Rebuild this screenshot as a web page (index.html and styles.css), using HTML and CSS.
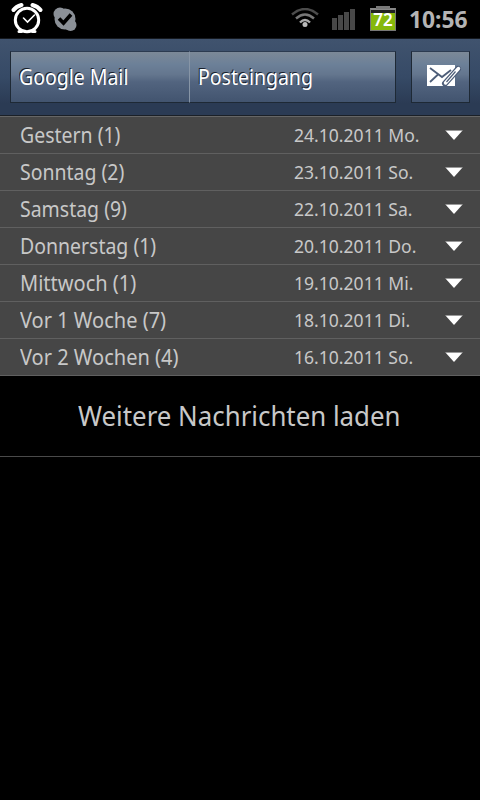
FILE: index.html
```
<!DOCTYPE html>
<html lang="de">
  <head>
    <meta charset="UTF-8" />
    <meta name="viewport" content="width=device-width, initial-scale=1.0" />
    <title>Posteingang</title>
    <link rel="stylesheet" href="styles.css">
  </head>
  <body>
    <!-- Status bar -->
    <div class="status">
      <svg class="alarm" width="32" height="34" viewBox="0 0 32 34">
        <g fill="none" stroke="#fff" stroke-linecap="round">
          <path d="M2.500 9Q5 5.500 10.500 4M21.500 4Q27 5.500 29.500 9" stroke-width="4" />
          <circle cx="16" cy="19" r="11.700" stroke-width="3" />
          <path d="M12.500 17l4 4 7-7" stroke-width="1.600" />
          <path d="M8 30.500h2.500M21.500 30.500H24" stroke-width="3" />
        </g>
      </svg>
      <svg class="skype" width="24" height="26" viewBox="0 0 24 26">
        <g fill="#8b9097">
          <circle cx="12" cy="12" r="10.500" />
          <circle cx="7" cy="7" r="6.500" />
          <circle cx="17.500" cy="18" r="6" />
        </g>
        <path d="M6 11.500l4.500 4.500 7.500-8.500" fill="none" stroke="#000" stroke-width="3.600" />
      </svg>
      <svg class="wifi" width="28" height="22" viewBox="0 0 28 22">
        <g fill="none" stroke-width="2.400">
          <path d="M1 6.500Q14-4.500 27 6.500" stroke="#4c4c4c" />
          <path d="M5 10.500Q14 2.500 23 10.500" stroke="#777" />
          <path d="M9 14.500Q14 9.500 19 14.500" stroke="#aaa" />
        </g>
        <circle cx="14" cy="16.500" r="2.500" fill="#bbb" />
      </svg>
      <svg class="signal" width="24" height="22" viewBox="0 0 24 22" fill="#484848">
        <path d="M0 9h5v12H0zM6 6h5v15H6zM12 3h5v18h-5zM18 0h5v21h-5z" />
      </svg>
      <div class="battery"><span>72</span></div>
      <div class="clock"><span>10:56</span></div>
    </div>

    <!-- Toolbar -->
    <div class="toolbar">
      <div class="group">
        <button class="account"><span>Google Mail</span></button>
        <button class="folder"><span>Posteingang</span></button>
      </div>
      <button class="compose" aria-label="Neue Nachricht">
        <svg width="36" height="24" viewBox="0 0 36 24">
          <path d="M1 1h28v21H1z" fill="#fff" />
          <path d="M4 4l12 9 9-7M4 18l8-7.500" fill="none" stroke="#4d5d78" stroke-width="1.800" />
          <path d="M19 19.500L32 5" stroke="#4d5d78" stroke-width="6" stroke-linecap="round" />
          <path d="M19.500 19L32.500 4.500" stroke="#fff" stroke-width="3.400" stroke-linecap="round" />
          <path d="M20.500 18L29.500 7.500" stroke="#4d5d78" stroke-width="1.200" />
        </svg>
      </button>
    </div>

    <!-- Messages by day -->
    <ul class="days">
      <li><span class="day">Gestern (1)</span><span class="date">24.10.2011 Mo.</span><i class="arrow"></i></li>
      <li><span class="day">Sonntag (2)</span><span class="date">23.10.2011 So.</span><i class="arrow"></i></li>
      <li><span class="day">Samstag (9)</span><span class="date">22.10.2011 Sa.</span><i class="arrow"></i></li>
      <li><span class="day">Donnerstag (1)</span><span class="date">20.10.2011 Do.</span><i class="arrow"></i></li>
      <li><span class="day wide">Mittwoch (1)</span><span class="date">19.10.2011 Mi.</span><i class="arrow"></i></li>
      <li><span class="day wide">Vor 1 Woche (7)</span><span class="date">18.10.2011 Di.</span><i class="arrow"></i></li>
      <li><span class="day wide">Vor 2 Wochen (4)</span><span class="date">16.10.2011 So.</span><i class="arrow"></i></li>
    </ul>

    <div class="more"><span>Weitere Nachrichten laden</span></div>
  </body>
</html>
```
FILE: styles.css
```
* {
  box-sizing: border-box;
}

body {
  margin: 0;
  background: #000;
  color: #c8c8c8;
  font-family: "Noto Sans", "Open Sans", sans-serif;
}

/* Status bar */
.status {
  display: flex;
  align-items: flex-start;
  height: 38px;
  padding-left: 11px;
}

.alarm {
  margin-top: 1px;
}

.skype {
  margin: 7px 0 0 10px;
}

.wifi {
  margin: 8px 0 0 214px;
}

.signal {
  margin: 9px 0 0 13px;
}

.battery {
  position: relative;
  width: 26px;
  height: 23px;
  margin: 8px 0 0 14px;
  border: 1px solid #777;
  border-top: 2px solid #888;
  background: linear-gradient(#222 3px, #86b80b 3px);
  color: #fff;
  font-size: 17px;
  font-weight: 600;
  line-height: 19px;
  text-align: center;
}

.battery::before {
  content: "";
  position: absolute;
  top: -4px;
  left: 5px;
  width: 14px;
  height: 3px;
  background: #777;
}

.clock {
  margin-left: 13px;
  color: #b4b4b4;
  font-size: 24px;
  font-weight: 700;
  line-height: 38px;
}

/* Toolbar */
.toolbar {
  display: flex;
  justify-content: space-between;
  height: 78px;
  padding: 12px 10px 0;
  border-top: 1px solid #15191f;
  border-bottom: 1px solid #1b2027;
  background: linear-gradient(#40536e, #364a66 50%, #2b3b54 85%);
}

.group {
  display: flex;
  width: 386px;
}

button {
  height: 52px;
  padding: 0 0 2px 8px;
  border: 1px solid #1e2935;
  border-top-color: #2c3b50;
  background: linear-gradient(#7c8997, #6c8098 25%, #64768e 45%, #52647f 60%, #42546f);
  color: #fff;
  font-family: inherit;
  font-size: 22px;
  text-align: left;
  text-shadow: -1px -1px 0 #18202b;
}

.account {
  width: 179px;
  border-right: 0;
}

.folder {
  flex: 1;
  border-left-color: #8795a6;
}

.compose {
  width: 59px;
  padding: 0 0 2px 14px;
}

.compose svg {
  display: block;
}

/* narrow letters, scaled from the left edge */
button span,
.day,
.date,
.clock span,
.more span {
  display: inline-block;
  transform: scaleX(0.885);
  transform-origin: 0 50%;
  white-space: nowrap;
}

.clock span {
  transform: scaleX(0.95);
}

/* List */
.days {
  margin: 0;
  padding: 0;
  border-top: 1px solid #666;
  list-style: none;
}

.days li {
  display: flex;
  align-items: center;
  height: 37px;
  padding-left: 20px;
  border-bottom: 1px solid #606060;
  background: #464646;
}

.day {
  width: 274px;
  padding-bottom: 2px;
  font-size: 22px;
}

.day.wide {
  transform: scaleX(0.91);
}

.date {
  width: 151px;
  font-size: 18px;
  transform: scaleX(0.975);
}

.arrow {
  width: 18px;
  height: 10px;
  background: linear-gradient(#999 1px, #fff 1px);
  clip-path: polygon(0 0, 100% 0, 50% 100%);
}

.more {
  height: 81px;
  padding-left: 78px;
  border-bottom: 1px solid #4a4a4a;
  font-size: 28px;
  line-height: 78px;
}

.more span {
  transform: scaleX(0.923);
}
```
